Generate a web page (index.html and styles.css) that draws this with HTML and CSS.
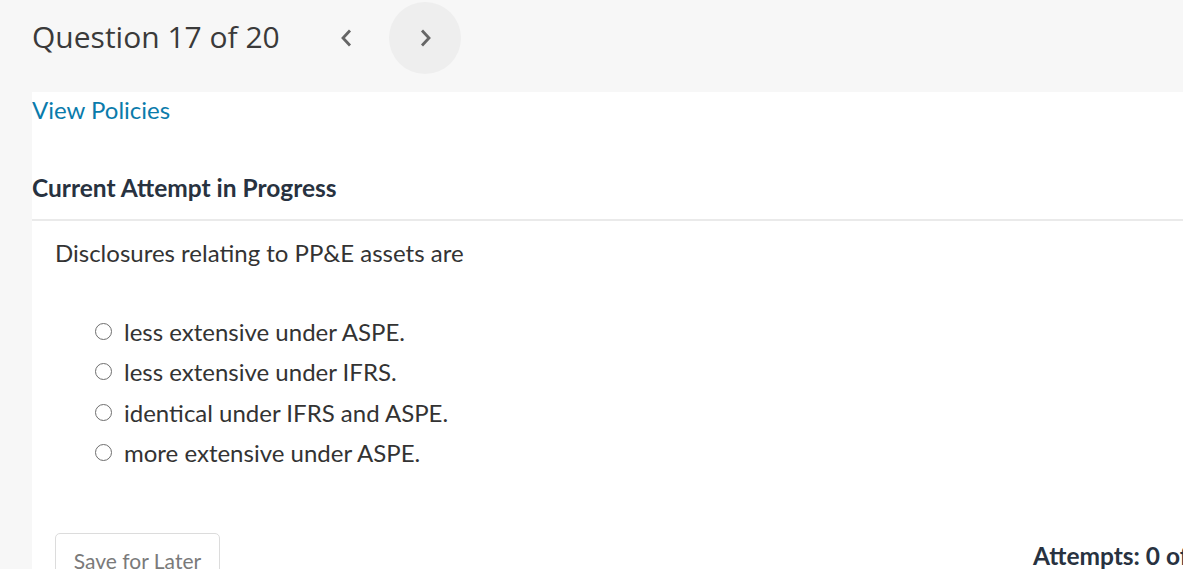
FILE: index.html
```html
<!DOCTYPE html>
<html>
<head>
<meta charset="utf-8">
<link rel="stylesheet" href="styles.css">
</head>
<body>
<header class="topbar">
  <h1 class="qtitle">Question 17 of 20</h1>
  <button class="nav prev" aria-label="Previous">
    <svg width="20" height="20" viewBox="0 0 20 20"><path d="M13 2.5 L6 10 L13 17.5" fill="none" stroke="#666" stroke-width="2.8" stroke-linejoin="miter"/></svg>
  </button>
  <button class="nav next" aria-label="Next">
    <svg width="20" height="20" viewBox="0 0 20 20"><path d="M7 2.5 L14 10 L7 17.5" fill="none" stroke="#666" stroke-width="2.8" stroke-linejoin="miter"/></svg>
  </button>
</header>
<main class="content">
  <a class="policies" href="#">View Policies</a>
  <h2 class="attempt">Current Attempt in Progress</h2>
  <div class="question">
    <p class="prompt">Disclosures relating to PP&amp;E assets are</p>
    <ul class="options">
      <li><span class="radio"></span>less extensive under ASPE.</li>
      <li><span class="radio"></span>less extensive under IFRS.</li>
      <li><span class="radio"></span>identical under IFRS and ASPE.</li>
      <li><span class="radio"></span>more extensive under ASPE.</li>
    </ul>
    <div class="footer">
      <button class="save">Save for Later</button>
      <div class="attempts">Attempts: 0 of 1 used</div>
    </div>
  </div>
</main>
</body>
</html>
```

FILE: styles.css
```css
html, body {
  margin: 0;
  padding: 0;
  background: #f7f7f7;
  overflow: hidden;
}
body {
  font-family: Lato, "Liberation Sans", sans-serif;
  color: #333;
}
.topbar {
  height: 92px;
  display: flex;
  align-items: center;
  padding-left: 32px;
  box-sizing: border-box;
}
.qtitle {
  margin: 0;
  font-family: "Open Sans", sans-serif;
  font-weight: 400;
  font-size: 30px;
  color: #3a3a3a;
  margin-right: 43px;
  margin-top: -20px;
}
.nav {
  width: 72px;
  height: 72px;
  border: none;
  border-radius: 50%;
  background: transparent;
  display: flex;
  align-items: center;
  justify-content: center;
  padding: 0;
  margin-top: -16px;
}
.prev { margin-left: -12px; margin-right: 6px; }
.next { background: #eeeeee; }
.content {
  background: #fff;
  margin-left: 32px;
  height: 477px;
  overflow: hidden;
}
.policies {
  display: block;
  color: #0a7bab;
  text-decoration: none;
  font-size: 24px;
  line-height: 36px;
}
.attempt {
  margin: 47px 0 0 0;
  font-size: 24.5px;
  font-weight: 700;
  color: #283240;
  line-height: 26px;
  padding-bottom: 18px;
  border-bottom: 2px solid #eaeaea;
}
.question {
  padding-left: 23px;
}
.prompt {
  margin: 18px 0 0 0;
  font-size: 24px;
  line-height: 28px;
  color: #333;
}
.options {
  list-style: none;
  margin: 44px 0 0 0;
  padding: 0 0 0 40px;
}
.options li {
  display: flex;
  align-items: center;
  font-size: 24px;
  height: 40.5px;
  color: #333;
}
.radio {
  width: 15px;
  height: 15px;
  border: 1px solid #6e6e6e;
  border-radius: 50%;
  margin-right: 12px;
  flex: none;
}
.footer {
  display: flex;
  align-items: flex-start;
  margin-top: 60px;
}
.save {
  width: 165px;
  height: 54px;
  border: 1px solid #dcdcdc;
  border-radius: 5px;
  background: #fff;
  font-family: Lato, sans-serif;
  font-size: 21px;
  color: #7a7a7a;
  padding: 0;
  flex: none;
}
.attempts {
  font-size: 24.5px;
  font-weight: 700;
  color: #283240;
  white-space: nowrap;
  margin-top: 8px;
  margin-left: 813px;
}
```
